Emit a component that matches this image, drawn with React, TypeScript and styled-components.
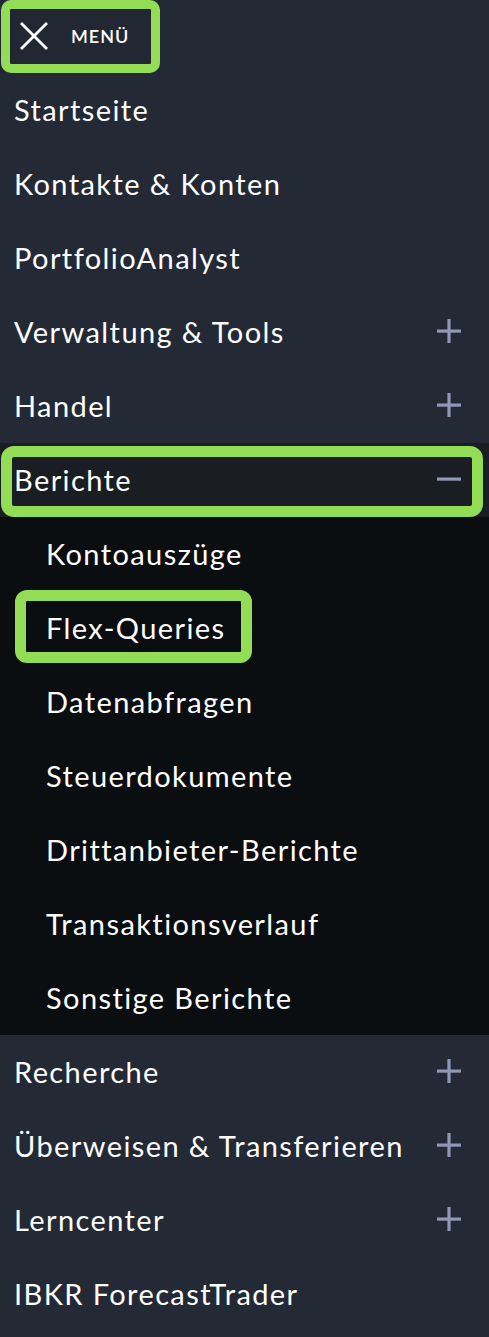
import React from "react";
import styled, { createGlobalStyle, css } from "styled-components";

const GlobalStyle = createGlobalStyle`
  html, body { margin: 0; padding: 0; background: #232a35; }
  body { font-family: Lato, "Open Sans", sans-serif; -webkit-font-smoothing: antialiased; }
`;

const Nav = styled.nav`
  width: 489px;
  min-height: 1337px;
  background: #232a35;
  display: flex;
  flex-direction: column;
`;

const Header = styled.div`
  height: 73px;
  display: flex;
  align-items: stretch;
`;

const MenuButton = styled.button`
  position: relative;
  width: 160px;
  display: flex;
  align-items: center;
  gap: 23px;
  padding: 0 0 1px 20px;
  margin: 0;
  background: #222833;
  border: none;
  color: #fff;
  font-family: inherit;
  font-size: 18px;
  font-weight: 600;
  letter-spacing: 1px;
  cursor: pointer;
`;

const Highlight = styled.span<{ $t: number; $l: number; $r: number; $b: number; $w?: number; $rad?: number }>`
  position: absolute;
  top: ${(p) => p.$t}px;
  left: ${(p) => p.$l}px;
  right: ${(p) => p.$r}px;
  bottom: ${(p) => p.$b}px;
  border: ${(p) => p.$w ?? 10}px solid #93dc56;
  border-radius: ${(p) => p.$rad ?? 11}px;
  pointer-events: none;
`;

const Row = styled.div<{ $sub?: boolean; $active?: boolean }>`
  position: relative;
  height: 74px;
  display: flex;
  align-items: center;
  justify-content: space-between;
  padding: 0 28px 2px ${(p) => (p.$sub ? 46 : 14)}px;
  color: #ffffff;
  font-size: 29px;
  font-weight: 400;
  letter-spacing: 1.4px;
  box-sizing: border-box;
  ${(p) =>
    p.$active &&
    css`
      background: #1a1d22;
    `}
`;

const Label = styled.span`
  position: relative;
  white-space: nowrap;
`;

const Section = styled.div`
  background: #0b0e11;
  display: flex;
  flex-direction: column;
`;

const Toggle = ({ open }: { open?: boolean }) => (
  <svg width="24" height="24" viewBox="0 0 24 24" aria-hidden>
    <rect x="0" y="10.5" width="24" height="3.2" fill="#8f98b5" />
    {!open && <rect x="10.4" y="0" width="3.2" height="24" fill="#8f98b5" />}
  </svg>
);

const CloseIcon = () => (
  <svg width="28" height="28" viewBox="0 0 28 28" aria-hidden>
    <path d="M2 2 L26 26 M26 2 L2 26" stroke="#fff" strokeWidth="2.8" strokeLinecap="square" />
  </svg>
);

const top = [
  { label: "Startseite" },
  { label: "Kontakte & Konten" },
  { label: "PortfolioAnalyst" },
  { label: "Verwaltung & Tools", plus: true },
  { label: "Handel", plus: true },
];

const subs = [
  "Kontoauszüge",
  "Flex-Queries",
  "Datenabfragen",
  "Steuerdokumente",
  "Drittanbieter-Berichte",
  "Transaktionsverlauf",
  "Sonstige Berichte",
];

const bottom = [
  { label: "Recherche", plus: true },
  { label: "Überweisen & Transferieren", plus: true },
  { label: "Lerncenter", plus: true },
  { label: "IBKR ForecastTrader" },
];

export default function App() {
  return (
    <>
      <GlobalStyle />
      <Nav>
        <Header>
          <MenuButton>
            <CloseIcon />
            <span>MENÜ</span>
            <Highlight $t={0} $l={1} $r={0} $b={0} $w={9} $rad={10} />
          </MenuButton>
        </Header>
        {top.map((i) => (
          <Row key={i.label}>
            <Label>{i.label}</Label>
            {i.plus && <Toggle />}
          </Row>
        ))}
        <Section>
          <Row $active>
            <Label>Berichte</Label>
            <Toggle open />
            <Highlight $t={3} $l={1} $r={6} $b={0} $w={11} $rad={13} />
          </Row>
          {subs.map((s) => (
            <Row $sub key={s}>
              <Label>{s}</Label>
              {s === "Flex-Queries" && <Highlight $t={-1} $l={15} $r={237} $b={2} $w={11} $rad={12} />}
            </Row>
          ))}
        </Section>
        {bottom.map((i) => (
          <Row key={i.label}>
            <Label>{i.label}</Label>
            {i.plus && <Toggle />}
          </Row>
        ))}
      </Nav>
    </>
  );
}
